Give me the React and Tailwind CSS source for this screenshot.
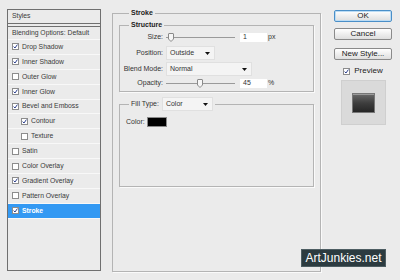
import React from 'react';

const font = "font-['Liberation_Sans',Arial,sans-serif]";

function Check({ on }) {
  return (
    <span className="flex h-[7px] w-[7px] shrink-0 items-center justify-center border border-[#8c8c8c] bg-white">
      {on && (
        <svg width="5" height="5" viewBox="0 0 5 5">
          <path d="M0.6 2.6 L2 4 L4.4 0.6" fill="none" stroke="#2c3f8c" strokeWidth="1" />
        </svg>
      )}
    </span>
  );
}

function StyleRow({ label, on, indent, active }) {
  return (
    <div
      className={
        'flex h-[14.9px] items-center gap-[3px] border-b border-[#f8f8f8] ' +
        (indent ? 'pl-[13px] ' : 'pl-[4px] ') +
        (active ? 'bg-[#3399f3] font-bold text-white' : 'text-[#3a3a3a]')
      }
    >
      <Check on={on} />
      <span>{label}</span>
    </div>
  );
}

function Dropdown({ value, w }) {
  return (
    <div className={'flex h-[14px] items-center justify-between border border-[#e0e0e0] bg-[#f4f4f4] pl-[3px] pr-[4px] ' + w}>
      <span>{value}</span>
      <svg width="5" height="3" viewBox="0 0 5 3">
        <path d="M0 0 H5 L2.5 3 Z" fill="#111" />
      </svg>
    </div>
  );
}

function Slider({ pos }) {
  return (
    <div className="relative h-[10px] w-[69px]">
      <div className="absolute left-0 right-0 top-[5px] h-[2px] border-t border-[#9a9a9a] border-b-white" />
      <svg className="absolute top-[1px]" style={{ left: pos }} width="6" height="9" viewBox="0 0 6 9">
        <path d="M1 0.5 H5 Q5.5 0.5 5.5 1 V6 L3 8.5 L0.5 6 V1 Q0.5 0.5 1 0.5 Z" fill="#f6f6f6" stroke="#8a8a8a" />
      </svg>
    </div>
  );
}

const btn =
  'flex h-[12px] w-[58px] items-center justify-center rounded-[2px] border bg-gradient-to-b from-white to-[#dedede] text-[8px] text-[#222]';

export default function App() {
  return (
    <div className={'relative flex h-[280px] w-[400px] overflow-hidden bg-[#ebebeb] pl-[7px] pt-[9px] ' + font}>
      {/* Styles list */}
      <div className="flex h-[262px] w-[94px] flex-col border border-[#707070] text-[6.8px]">
        <div className="flex h-[14px] items-center border-b border-[#707070] pl-[4px] text-[#3a3a3a]">Styles</div>
        <div className="h-[2px]" />
        <div className="flex h-[14px] items-center border-y border-[#707070] border-b-[#f8f8f8] pl-[4px] text-[#3a3a3a]">
          Blending Options: Default
        </div>
        <StyleRow label="Drop Shadow" on />
        <StyleRow label="Inner Shadow" on />
        <StyleRow label="Outer Glow" />
        <StyleRow label="Inner Glow" on />
        <StyleRow label="Bevel and Emboss" on />
        <StyleRow label="Contour" on indent />
        <StyleRow label="Texture" indent />
        <StyleRow label="Satin" />
        <StyleRow label="Color Overlay" />
        <StyleRow label="Gradient Overlay" on />
        <StyleRow label="Pattern Overlay" />
        <StyleRow label="Stroke" on active />
      </div>

      {/* Stroke settings */}
      <fieldset className="ml-[11px] h-[263px] w-[209px] border border-[#b4b4b4] px-[6px] text-[7px] text-[#333] shadow-[1px_1px_0_#fafafa]">
        <legend className="ml-[10px] px-[2px] font-bold leading-[8px] text-[#222]">Stroke</legend>

        <fieldset className="mt-[4px] h-[71px] border border-[#b4b4b4] shadow-[1px_1px_0_#fafafa]">
          <legend className="ml-[9px] px-[2px] font-bold leading-[8px] text-[#222]">Structure</legend>
          <div className="mt-[3px] flex h-[10px] items-center">
            <span className="w-[43px] text-right">Size:</span>
            <span className="ml-[3px]"><Slider pos={2} /></span>
            <div className="ml-[5px] flex h-[9px] w-[27px] items-center bg-white pl-[3px]">1</div>
            <span className="ml-[1px]">px</span>
          </div>
          <div className="mt-[4px] flex h-[14px] items-center">
            <span className="w-[43px] text-right">Position:</span>
            <span className="ml-[3px]"><Dropdown value="Outside" w="w-[49px]" /></span>
          </div>
          <div className="mt-[2px] flex h-[14px] items-center">
            <span className="w-[43px] text-right">Blend Mode:</span>
            <span className="ml-[3px]"><Dropdown value="Normal" w="w-[86px]" /></span>
          </div>
          <div className="mt-[2px] flex h-[10px] items-center">
            <span className="w-[43px] text-right">Opacity:</span>
            <span className="ml-[3px]"><Slider pos={31} /></span>
            <div className="ml-[5px] flex h-[9px] w-[27px] items-center bg-white pl-[3px]">45</div>
            <span className="ml-[1px]">%</span>
          </div>
        </fieldset>

        <fieldset className="mt-[5px] h-[90px] border border-[#b4b4b4] shadow-[1px_1px_0_#fafafa]">
          <legend className="ml-[9px] flex items-center px-[2px]">
            <span>Fill Type:</span>
            <span className="ml-[3px]"><Dropdown value="Color" w="w-[51px]" /></span>
          </legend>
          <div className="mt-[6px] flex h-[10px] items-center pl-[6px]">
            <span>Color:</span>
            <span className="ml-[2px] h-[10px] w-[20px] border border-[#8a8a8a] bg-black" />
          </div>
        </fieldset>
      </fieldset>

      {/* Buttons */}
      <div className="ml-[13px] mt-[1px] flex w-[58px] flex-col items-center">
        <div className={btn + ' border-[#4a8fc8] shadow-[0_0_0_1px_#bcdcf4_inset]'}>OK</div>
        <div className={btn + ' mt-[6px] border-[#8a8a8a]'}>Cancel</div>
        <div className={btn + ' mt-[8px] border-[#8a8a8a]'}>New Style...</div>
        <div className="mt-[7px] flex h-[8px] items-center gap-[4px] text-[8px] text-[#222]">
          <Check on />
          <span>Preview</span>
        </div>
        <div className="mt-[6px] flex h-[43px] w-[43px] items-center justify-center bg-[#dadada] shadow-[0_0_0_1px_#cfcfcf]">
          <div className="h-[20px] w-[23px] border border-[#777] bg-gradient-to-b from-[#6a6a6a] via-[#3e3e3e] to-[#262626] shadow-[inset_0_1px_0_#9a9a9a]" />
        </div>
      </div>

      {/* watermark */}
      <div className="absolute left-[301px] top-[249px] flex h-[18px] w-[85px] items-center justify-center border border-[#4d5d62] bg-[#2c3b40] text-[12px] text-white">
        ArtJunkies.net
      </div>
    </div>
  );
}
